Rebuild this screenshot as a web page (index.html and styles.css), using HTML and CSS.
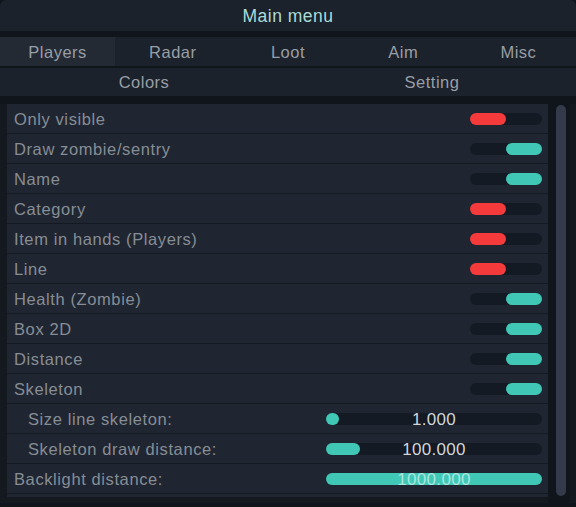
FILE: index.html
```html
<!DOCTYPE html>
<html lang="en">
<head>
    <meta charset="UTF-8">
    <meta name="viewport" content="width=device-width, initial-scale=1.0">
    <title>Main menu</title>
    <link rel="stylesheet" href="styles.css">
</head>
<body>
    <div class="menu">
        <header class="title-bar">Main menu</header>

        <nav class="tabs">
            <div class="tab active">Players</div>
            <div class="tab">Radar</div>
            <div class="tab">Loot</div>
            <div class="tab">Aim</div>
            <div class="tab">Misc</div>
        </nav>

        <nav class="subtabs">
            <div class="tab">Colors</div>
            <div class="tab">Setting</div>
        </nav>

        <main class="content">
            <div class="list">
                <div class="row"><span class="label">Only visible</span><span class="toggle off"></span></div>
                <div class="row"><span class="label">Draw zombie/sentry</span><span class="toggle on"></span></div>
                <div class="row"><span class="label">Name</span><span class="toggle on"></span></div>
                <div class="row"><span class="label">Category</span><span class="toggle off"></span></div>
                <div class="row"><span class="label">Item in hands (Players)</span><span class="toggle off"></span></div>
                <div class="row"><span class="label">Line</span><span class="toggle off"></span></div>
                <div class="row"><span class="label">Health (Zombie)</span><span class="toggle on"></span></div>
                <div class="row"><span class="label">Box 2D</span><span class="toggle on"></span></div>
                <div class="row"><span class="label">Distance</span><span class="toggle on"></span></div>
                <div class="row"><span class="label">Skeleton</span><span class="toggle on"></span></div>
                <div class="row sub">
                    <span class="label">Size line skeleton:</span>
                    <span class="slider"><span class="fill knob"></span><span class="value">1.000</span></span>
                </div>
                <div class="row sub">
                    <span class="label">Skeleton draw distance:</span>
                    <span class="slider"><span class="fill" style="width: 34px"></span><span class="value">100.000</span></span>
                </div>
                <div class="row">
                    <span class="label">Backlight distance:</span>
                    <span class="slider"><span class="fill" style="width: 100%"></span><span class="value light">1000.000</span></span>
                </div>
            </div>

            <div class="scrollbar">
                <div class="thumb"></div>
            </div>
        </main>
    </div>
</body>
</html>
```

FILE: styles.css
```css
* {
    box-sizing: border-box;
    margin: 0;
    padding: 0;
}

html, body {
    height: 100%;
    overflow: hidden;
}

body {
    font-family: 'Liberation Sans', Arial, sans-serif;
    font-size: 16.5px;
    background-color: #0f131a;
    color: #878d95;
}

.menu {
    width: 576px;
    height: 507px;
    display: flex;
    flex-direction: column;
    background-color: #10141b;
}

/* Barra de titulo */
.title-bar {
    height: 31px;
    display: flex;
    align-items: center;
    justify-content: center;
    padding-top: 2px;
    background-color: #1c222c;
    border-radius: 6px 6px 0 0;
    color: #a9dcd8;
    font-size: 17.5px;
    letter-spacing: 0.5px;
    margin-bottom: 6px;
}

.tabs, .subtabs {
    display: grid;
    background-color: #1c222b;
    color: #989ea6;
}

.tabs {
    grid-template-columns: repeat(5, 1fr);
    height: 31px;
    border-bottom: 2px solid #10141b;
}

.subtabs {
    grid-template-columns: 1fr 1fr;
    height: 28px;
    margin-bottom: 8px;
}

.tab {
    display: flex;
    align-items: center;
    justify-content: center;
    padding-top: 1px;
    letter-spacing: 0.5px;
}

.tab.active {
    background-color: #232a34;
}

/* Lista de opciones */
.content {
    display: flex;
    padding-left: 7px;
    background-color: #141920;
}

.list {
    width: 541px;
    height: 393px;
    background-color: #1f2631;
}

.row {
    height: 30px;
    display: flex;
    align-items: center;
    justify-content: space-between;
    padding: 0 6px 0 7px;
    border-bottom: 1px solid #151a22;
}

.row.sub {
    padding-left: 21px;
}

.label {
    letter-spacing: 0.6px;
    padding-top: 2px;
}

.toggle {
    width: 72px;
    height: 12px;
    border-radius: 6px;
    background-color: #141a23;
    display: flex;
}

.toggle::before {
    content: '';
    width: 36px;
    height: 12px;
    border-radius: 6px;
    background-color: #f43a3b;
}

.toggle.on {
    justify-content: flex-end;
}

.toggle.on::before {
    background-color: #40c7b6;
}

.slider {
    position: relative;
    width: 216px;
    height: 12px;
    border-radius: 6px;
    background-color: #141a23;
    display: flex;
    align-items: center;
}

.fill {
    height: 12px;
    border-radius: 6px;
    background-color: #40c7b6;
}

.fill.knob {
    width: 13px;
}

.value {
    position: absolute;
    left: 0;
    right: 0;
    top: 1px;
    text-align: center;
    color: #d2d6da;
    font-size: 17px;
    line-height: 12px;
    letter-spacing: 0.3px;
}

.value.light {
    color: #a9e6df;
}

/* Barra de desplazamiento */
.scrollbar {
    width: 22px;
    height: 399px;
    padding: 1px 4px 0 8px;
    background-color: #10151c;
}

.thumb {
    height: 391px;
    border-radius: 5px;
    background-color: #343a4a;
}
```
